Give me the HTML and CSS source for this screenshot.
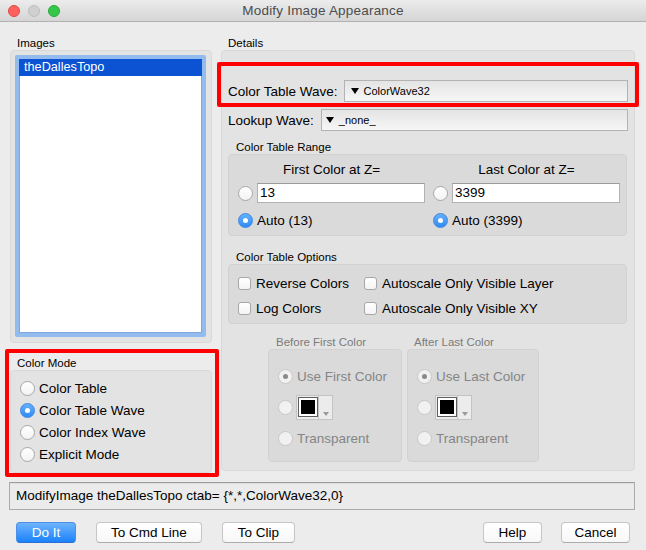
FILE: index.html
```html
<!DOCTYPE html>
<html>
<head>
<meta charset="utf-8">
<title>Modify Image Appearance</title>
<link rel="stylesheet" href="styles.css">
</head>
<body>
<div class="titlebar">
  <div class="lights"><span class="light red"></span><span class="light gray"></span><span class="light green"></span></div>
  <div class="title">Modify Image Appearance</div>
</div>
<div class="content">
  <div class="columns">
    <div class="left">
      <div class="glabel">Images</div>
      <div class="gbox images-box">
        <div class="list">
          <div class="item sel">theDallesTopo</div>
        </div>
      </div>
      <div class="mode-wrap">
        <div class="glabel">Color Mode</div>
        <div class="gbox mode-box">
          <div class="rrow"><span class="radio"></span>Color Table</div>
          <div class="rrow"><span class="radio on"></span>Color Table Wave</div>
          <div class="rrow"><span class="radio"></span>Color Index Wave</div>
          <div class="rrow"><span class="radio"></span>Explicit Mode</div>
        </div>
      </div>
    </div>
    <div class="right">
      <div class="glabel">Details</div>
      <div class="gbox details">
        <div class="prow ctw"><span class="plabel">Color Table Wave:</span><div class="popup"><span class="tri"></span><span class="ptext">ColorWave32</span></div></div>
        <div class="prow lw"><span class="plabel">Lookup Wave:</span><div class="popup"><span class="tri"></span><span class="ptext">_none_</span></div></div>

        <div class="glabel sub-label range-label">Color Table Range</div>
        <div class="sbox range">
          <div class="rcol">
            <div class="rhead">First Color at Z=</div>
            <div class="frow"><span class="radio"></span><div class="field">13</div></div>
            <div class="arow"><span class="radio on"></span>Auto (13)</div>
          </div>
          <div class="rcol">
            <div class="rhead">Last Color at Z=</div>
            <div class="frow"><span class="radio"></span><div class="field">3399</div></div>
            <div class="arow"><span class="radio on"></span>Auto (3399)</div>
          </div>
        </div>

        <div class="glabel sub-label opt-label">Color Table Options</div>
        <div class="sbox options">
          <div class="crow"><span class="check"></span>Reverse Colors</div>
          <div class="crow"><span class="check"></span>Autoscale Only Visible Layer</div>
          <div class="crow"><span class="check"></span>Log Colors</div>
          <div class="crow"><span class="check"></span>Autoscale Only Visible XY</div>
        </div>

        <div class="ba">
          <div class="bacol before">
            <div class="glabel dim">Before First Color</div>
            <div class="sbox babox">
              <div class="drow"><span class="radio dis on"></span>Use First Color</div>
              <div class="drow"><span class="radio dis"></span><div class="swatch"><div class="sq"><div class="blk"></div></div><div class="sw-arrow"><span></span></div></div></div>
              <div class="drow"><span class="radio dis"></span>Transparent</div>
            </div>
          </div>
          <div class="bacol after">
            <div class="glabel dim">After Last Color</div>
            <div class="sbox babox">
              <div class="drow"><span class="radio dis on"></span>Use Last Color</div>
              <div class="drow"><span class="radio dis"></span><div class="swatch"><div class="sq"><div class="blk"></div></div><div class="sw-arrow"><span></span></div></div></div>
              <div class="drow"><span class="radio dis"></span>Transparent</div>
            </div>
          </div>
        </div>
      </div>
    </div>
  </div>
  <div class="cmd">ModifyImage theDallesTopo ctab= {*,*,ColorWave32,0}</div>
  <div class="buttons">
    <button class="btn primary doit">Do It</button>
    <button class="btn cmdline">To Cmd Line</button>
    <button class="btn clip">To Clip</button>
    <button class="btn help">Help</button>
    <button class="btn cancel">Cancel</button>
  </div>
</div>
</body>
</html>
```
FILE: styles.css
```css
* { box-sizing: border-box; }
html, body { margin: 0; padding: 0; }
body {
  width: 646px;
  height: 550px;
  overflow: hidden;
  background: #ececec;
  font-family: "Liberation Sans", Arial, sans-serif;
  font-size: 13.5px;
  color: #000;
}

/* title bar */
.titlebar {
  position: relative;
  height: 22px;
  background: linear-gradient(#ececec, #d5d5d5);
  border-bottom: 1px solid #b1b1b1;
  display: flex;
  align-items: center;
  justify-content: center;
}
.lights { position: absolute; left: 8px; top: 5px; display: flex; gap: 8px; }
.light { width: 12px; height: 12px; border-radius: 50%; display: block; }
.light.red { background: #fc615d; border: 1px solid #df4744; }
.light.gray { background: #d0d0d0; border: 1px solid #bdbdbd; }
.light.green { background: #34c84a; border: 1px solid #27a839; }
.title { font-size: 13.5px; color: #4d4d4d; letter-spacing: 0.2px; }

/* content */
.content { padding: 14px 11px 0 9px; }
.columns { display: flex; gap: 9px; margin-left: 1px; }
.left { width: 202px; display: flex; flex-direction: column; margin-bottom: -2px; }
.right { width: 414px; }

.glabel { font-size: 11.5px; line-height: 14px; height: 14px; padding-left: 7px; color: #000; }
.gbox { background: #e3e3e3; border: 1px solid #d9d9d9; border-radius: 4px; }
.sbox { background: #dadada; border: 1px solid #d2d2d2; border-radius: 4px; }

/* images list */
.images-box { height: 293px; padding: 4px 5px 5px 4px; }
.list {
  height: 282px;
  background: #fff;
  border: 4px solid #92bbee;
  box-shadow: inset 0 0 0 1px #7ea8e0;
  border-radius: 2px;
}
.item { height: 17px; line-height: 17px; padding-left: 5px; font-size: 12.7px; }
.item.sel { background: #0b53d2; color: #fff; }

/* color mode */
.mode-wrap { position: relative; margin-top: 13px; }
.mode-wrap::after {
  content: "";
  position: absolute;
  left: -5px; top: -7px; right: -7px; bottom: -4px;
  border: 4px solid #ff0000;
  border-radius: 2px;
}
.mode-box { height: 103px; padding: 6px 0 0 9px; }
.rrow { display: flex; align-items: center; height: 22px; gap: 4px; }

/* radios and checks */
.radio {
  width: 15px; height: 15px; border-radius: 50%;
  background: linear-gradient(#ffffff, #f3f3f3);
  border: 1px solid #a7a7a7;
  flex: none;
  display: inline-flex; align-items: center; justify-content: center;
}
.radio.on { background: linear-gradient(#68b0fb, #2e8bf6); border-color: #3d87e0; }
.radio.on::after { content: ""; width: 5px; height: 5px; border-radius: 50%; background: #fff; }
.radio.dis { background: #f1f1f1; border-color: #c7c7c7; }
.radio.dis.on::after { background: #8a8a8a; }
.check {
  width: 13px; height: 13px; border-radius: 3px; flex: none;
  background: linear-gradient(#ffffff, #f4f4f4);
  border: 1px solid #a7a7a7;
}

/* details */
.details { height: 421px; padding: 29px 6px 0 6px; }
.prow { display: flex; align-items: center; height: 22px; }
.prow.ctw { position: relative; }
.prow.ctw::after {
  content: "";
  position: absolute;
  left: -11px; right: -11px; top: -18px; bottom: -5px;
  border: 4px solid #ff0000;
  border-radius: 2px;
}
.prow.lw { margin-top: 7px; }
.plabel { white-space: nowrap; }
.popup {
  flex: 1;
  height: 22px;
  margin-left: 6px;
  border: 1px solid #b3b3b3;
  background: linear-gradient(#e4e4e4, #f6f6f6);
  display: flex; align-items: center;
  padding-left: 6px;
}
.lw .popup { margin-left: 7px; padding-left: 4px; }
.tri {
  width: 0; height: 0;
  border-left: 4.5px solid transparent;
  border-right: 4.5px solid transparent;
  border-top: 6px solid #000;
  margin-right: 5px;
}
.ptext { font-size: 11px; }

.sub-label { padding-left: 8px; }
.range-label { margin-top: 9px; }
.range {
  height: 82px;
  margin-right: 1px;
  padding: 7px 6px 0 9px;
  display: grid;
  grid-template-columns: 187px 187px;
  column-gap: 8px;
}
.rhead { text-align: center; height: 16px; line-height: 16px; }
.frow { display: flex; align-items: center; height: 20px; margin-top: 5px; }
.field {
  flex: 1; height: 20px; margin-left: 4px;
  background: #fff;
  border: 1px solid #b2b2b2; border-top-color: #9c9c9c;
  line-height: 18px; padding-left: 2px;
}
.arow { display: flex; align-items: center; height: 20px; margin-top: 7px; gap: 4px; }

.opt-label { margin-top: 14px; }
.options {
  height: 60px;
  margin-right: 1px;
  padding: 8px 0 0 9px;
  display: grid;
  grid-template-columns: 126px auto;
  grid-auto-rows: 20px;
  row-gap: 5px;
}
.crow { display: flex; align-items: center; gap: 5px; white-space: nowrap; }

.ba { display: flex; gap: 5px; margin-left: 40px; margin-top: 11px; }
.bacol.before { width: 134px; }
.bacol.after { width: 132px; }
.glabel.dim { color: #7b7b7b; padding-left: 8px; }
.after .glabel.dim { padding-left: 7px; }
.babox { height: 113px; padding: 15px 0 0 9px; display: flex; flex-direction: column; gap: 9px; }
.drow { display: flex; align-items: center; height: 22px; gap: 4px; color: #858585; white-space: nowrap; }
.swatch {
  display: flex;
  height: 25px; width: 37px;
  margin-left: -1px;
  border: 1px solid #c4c4c4;
  background: #ececec;
}
.sq {
  width: 22px; padding: 1px 0 0 1px;
  border-right: 1px solid #c4c4c4;
}
.sq .blk {
  width: 20px; height: 20px;
  border: 1px solid #5e5e5e;
  background: #000;
  box-shadow: inset 0 0 0 2px #fff;
}
.sw-arrow { flex: 1; position: relative; }
.sw-arrow span {
  position: absolute; left: 4px; bottom: 3px;
  width: 0; height: 0;
  border-left: 3px solid transparent;
  border-right: 3px solid transparent;
  border-top: 4px solid #9a9a9a;
}

/* command line */
.cmd {
  margin-top: 11px;
  height: 28px;
  border: 1px solid #ababab;
  border-top-color: #9c9c9c;
  background: #ebebeb;
  box-shadow: inset 0 1px 1px rgba(0,0,0,0.06);
  padding-left: 6px;
  line-height: 26px;
}

/* buttons */
.buttons { display: flex; margin-top: 12px; height: 21px; }
.btn {
  height: 21px;
  font-family: "Liberation Sans", Arial, sans-serif;
  font-size: 13.5px;
  color: #000;
  background: linear-gradient(#ffffff, #f7f7f7);
  border: 1px solid #c6c6c6;
  border-bottom-color: #acacac;
  border-radius: 4px;
  padding: 0;
  line-height: 19px;
}
.btn.primary {
  background: linear-gradient(#6db4fb, #1b82fb);
  border-color: #4d8fe6;
  border-bottom-color: #2a6fd6;
  color: #fff;
}
.doit { width: 60px; margin-left: 7px; }
.cmdline { width: 106px; margin-left: 20px; }
.clip { width: 73px; margin-left: 20px; }
.help { width: 59px; margin-left: auto; }
.cancel { width: 69px; margin-left: 19px; margin-right: 5px; }
```
